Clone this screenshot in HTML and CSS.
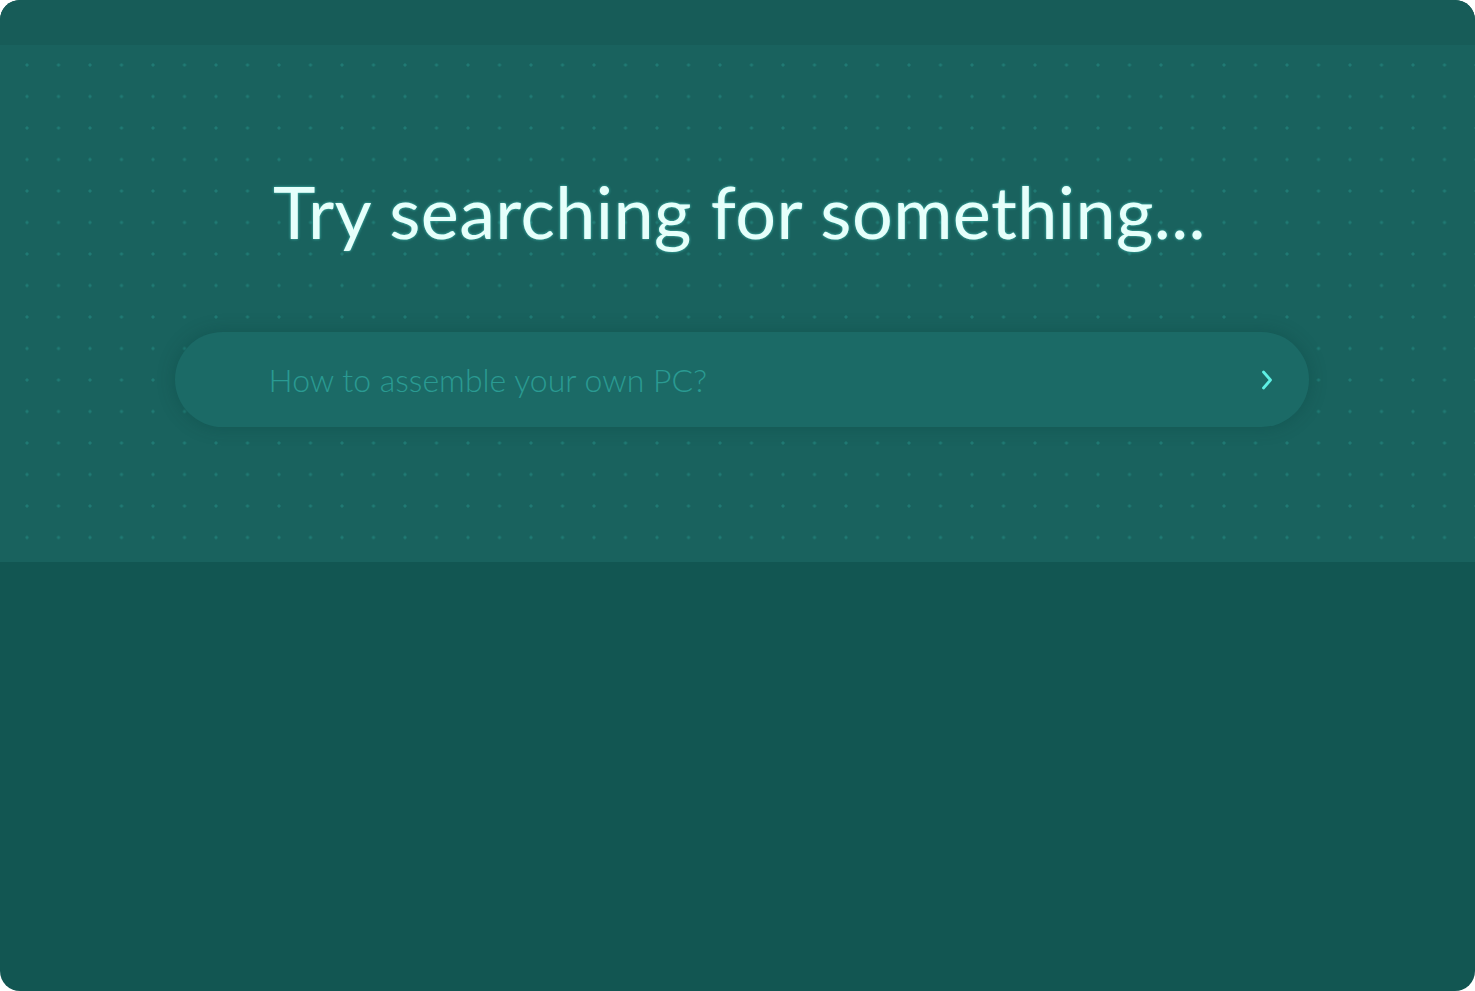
FILE: index.html
```html
<!DOCTYPE html>
<html lang="en">
<head>
  <meta charset="UTF-8"/>
  <meta name="viewport" content="width=device-width,initial-scale=1.0"/>
  <title>Search</title>
  <link rel="stylesheet" href="styles.css">
</head>
<body>
<div class="card">
  <div class="topbar"></div>
  <section class="hero">
    <h1>Try searching for something...</h1>
    <form class="search-bar">
      <input type="text" placeholder="How to assemble your own PC?"/>
      <button type="submit" class="go-btn" aria-label="Search">
        <svg width="14" height="22" viewBox="0 0 14 22" fill="none">
          <path d="M3.5 3 L10.5 11 L3.5 19" stroke="#5ef0e4" stroke-width="2.8" stroke-linecap="round" stroke-linejoin="round"/>
        </svg>
      </button>
    </form>
  </section>
  <div class="rest"></div>
</div>
</body>
</html>
```

FILE: styles.css
```css
body { margin:0; background:#fff; font-family:Lato, "Open Sans", sans-serif; }
.card { height:991px; border-radius:20px; overflow:hidden; background:#125652; display:flex; flex-direction:column; }
.topbar { height:45px; background:#175c58; }
.hero {
  height:517px;
  background-color:#19625e;
  background-image:radial-gradient(circle, #207a74 1.2px, transparent 1.9px);
  background-size:31.5px 31.5px;
  background-position:11.25px 4.25px;
  display:flex; flex-direction:column; align-items:center;
}
h1 { margin:130px 0 0 4px; font-weight:400; font-size:72px; line-height:1; color:#e6fffb; text-shadow:0 0 3px rgba(94,240,228,0.7); letter-spacing:0.4px; }
.search-bar { margin:85px 0 0 8px; width:1134px; height:95px; border-radius:48px; background:#1b6a66; box-shadow:0 0 18px rgba(8,50,46,0.25); display:flex; align-items:center; padding:0 28px 0 94px; box-sizing:border-box; }
.search-bar input { flex:1; background:none; border:none; outline:none; font-family:Lato, sans-serif; font-size:32px; font-weight:300; color:#2a9a92; padding:0; }
.search-bar input::placeholder { color:#2a9a92; }
.go-btn { background:none; border:none; cursor:pointer; padding:0; width:28px; height:28px; display:flex; align-items:center; justify-content:center; }
.rest { flex:1; }
```
